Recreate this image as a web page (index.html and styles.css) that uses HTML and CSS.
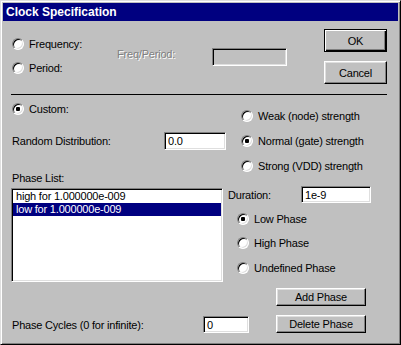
FILE: index.html
```html
<!DOCTYPE html>
<html>
<head>
<meta charset="utf-8">
<link rel="stylesheet" href="styles.css">
</head>
<body>
<div class="window">
  <div class="titlebar">Clock Specification</div>
  <div class="top">
    <div class="mode-col">
      <div class="radio"><span class="dot"></span>Frequency:</div>
      <div class="radio"><span class="dot"></span>Period:</div>
    </div>
    <div class="freq">
      <span class="freq-label">Freq/Period:</span>
      <span class="field field-disabled freq-field"></span>
    </div>
    <div class="btn-col">
      <div class="btn btn-default">OK</div>
      <div class="btn">Cancel</div>
    </div>
  </div>
  <div class="sep"></div>
  <div class="main">
    <div class="left">
      <div class="radio custom"><span class="dot on"></span>Custom:</div>
      <div class="row rand">
        <span class="rand-label">Random Distribution:</span>
        <span class="field rand-field">0.0</span>
      </div>
      <div class="plist-label">Phase List:</div>
      <div class="listbox">
        <div class="item">high for 1.000000e-009</div>
        <div class="item selected">low for 1.000000e-009</div>
      </div>
      <div class="row cycles">
        <span class="cycles-label">Phase Cycles (0 for infinite):</span>
        <span class="field cycles-field">0</span>
      </div>
    </div>
    <div class="right">
      <div class="strength">
        <div class="radio"><span class="dot"></span>Weak (node) strength</div>
        <div class="radio"><span class="dot on"></span>Normal (gate) strength</div>
        <div class="radio"><span class="dot"></span>Strong (VDD) strength</div>
      </div>
      <div class="row dur">
        <span class="dur-label">Duration:</span>
        <span class="field dur-field">1e-9</span>
      </div>
      <div class="phase">
        <div class="radio"><span class="dot on"></span>Low Phase</div>
        <div class="radio"><span class="dot"></span>High Phase</div>
        <div class="radio last"><span class="dot"></span>Undefined Phase</div>
      </div>
      <div class="btn btn-phase add">Add Phase</div>
      <div class="btn btn-phase del">Delete Phase</div>
    </div>
  </div>
</div>
</body>
</html>
```

FILE: styles.css
```css
* { box-sizing: border-box; }
html, body { margin: 0; padding: 0; background: #c0c0c0; }
body {
  font-family: "Liberation Sans", Arial, sans-serif;
  font-size: 11px;
  letter-spacing: -0.2px;
  color: #000;
}
.window {
  width: 401px;
  height: 345px;
  background: #c0c0c0;
  border: 1px solid;
  border-color: #dfdfdf #000 #000 #dfdfdf;
  box-shadow: inset 1px 1px #fff, inset -1px -1px #808080;
  padding: 2px;
}
.titlebar {
  height: 18px;
  background: #000080;
  color: #fff;
  font-weight: bold;
  font-size: 12px;
  letter-spacing: 0;
  line-height: 18px;
  padding-left: 3px;
}
.top { display: flex; align-items: flex-start; height: 73px; }
.mode-col {
  flex: none;
  margin-left: 9px;
  margin-top: 15px;
  width: 105px;
  display: flex;
  flex-direction: column;
  gap: 8px;
}
.radio {
  display: flex;
  align-items: center;
  gap: 5px;
  height: 16px;
  line-height: 16px;
  white-space: nowrap;
}
.dot {
  flex: none;
  width: 12px;
  height: 12px;
  border-radius: 50%;
  background: #fff;
  border: 1px solid;
  border-color: #808080 #fff #fff #808080;
  box-shadow: inset 1px 1px #000, inset -1px -1px #dfdfdf;
  display: flex;
  align-items: center;
  justify-content: center;
}
.dot.on::after {
  content: "";
  width: 4px;
  height: 4px;
  background: #000;
  border-radius: 1px;
}
.freq { flex: none; display: flex; align-items: flex-start; margin-top: 25px; width: 170px; }
.freq-label {
  flex: none;
  width: 95px;
  line-height: 16px;
  color: #808080;
  text-shadow: 1px 1px #fff;
}
.field {
  flex: none;
  display: flex;
  align-items: center;
  background: #fff;
  border: 1px solid;
  border-color: #808080 #fff #fff #808080;
  box-shadow: inset 1px 1px #000, inset -1px -1px #dfdfdf;
  padding-left: 3px;
  white-space: nowrap;
}
.field-disabled { background: #c0c0c0; }
.freq-field { width: 75px; height: 18px; margin-top: 2px; }
.btn-col {
  flex: none;
  margin-left: 37px;
  margin-top: 8px;
  display: flex;
  flex-direction: column;
  gap: 9px;
}
.btn {
  display: flex;
  align-items: center;
  justify-content: center;
  width: 63px;
  height: 23px;
  border: 1px solid;
  border-color: #fff #000 #000 #fff;
  box-shadow: inset -1px -1px #808080, inset 1px 1px #dfdfdf;
  white-space: nowrap;
}
.btn-default {
  border-color: #000;
  box-shadow: inset 1px 1px #fff, inset -1px -1px #000, inset -2px -2px #808080;
}
.sep { margin-left: 8px; width: 376px; height: 1px; background: #000; }
.main { display: flex; }
.left { flex: none; width: 225px; padding-left: 9px; }
.custom { margin-top: 6px; }
.row { display: flex; align-items: center; }
.rand { margin-top: 15px; }
.rand-label { flex: none; width: 152px; }
.rand-field { width: 62px; height: 18px; }
.plist-label { margin-top: 20px; line-height: 16px; }
.listbox {
  margin-top: 2px;
  margin-left: -1px;
  width: 212px;
  height: 94px;
  background: #fff;
  border: 1px solid;
  border-color: #808080 #fff #fff #808080;
  box-shadow: inset 1px 1px #000, inset -1px -1px #dfdfdf;
  padding: 1px;
}
.item { height: 13px; line-height: 13px; padding-left: 3px; white-space: nowrap; }
.item.selected { background: #000080; color: #fff; }
.cycles { margin-top: 34px; }
.cycles-label { flex: none; width: 191px; }
.cycles-field { width: 46px; height: 17px; }
.right { flex: none; width: 170px; }
.strength {
  margin-top: 13px;
  margin-left: 13px;
  display: flex;
  flex-direction: column;
  gap: 9px;
}
.dur { margin-top: 12px; }
.dur-label { flex: none; width: 73px; }
.dur-field { width: 70px; height: 17px; }
.phase {
  margin-top: 8px;
  margin-left: 9px;
  display: flex;
  flex-direction: column;
  gap: 8px;
}
.phase .last { margin-top: 1px; }
.btn-phase { width: 90px; height: 18px; margin-left: 48px; }
.add { margin-top: 12px; }
.del { margin-top: 9px; }
```
